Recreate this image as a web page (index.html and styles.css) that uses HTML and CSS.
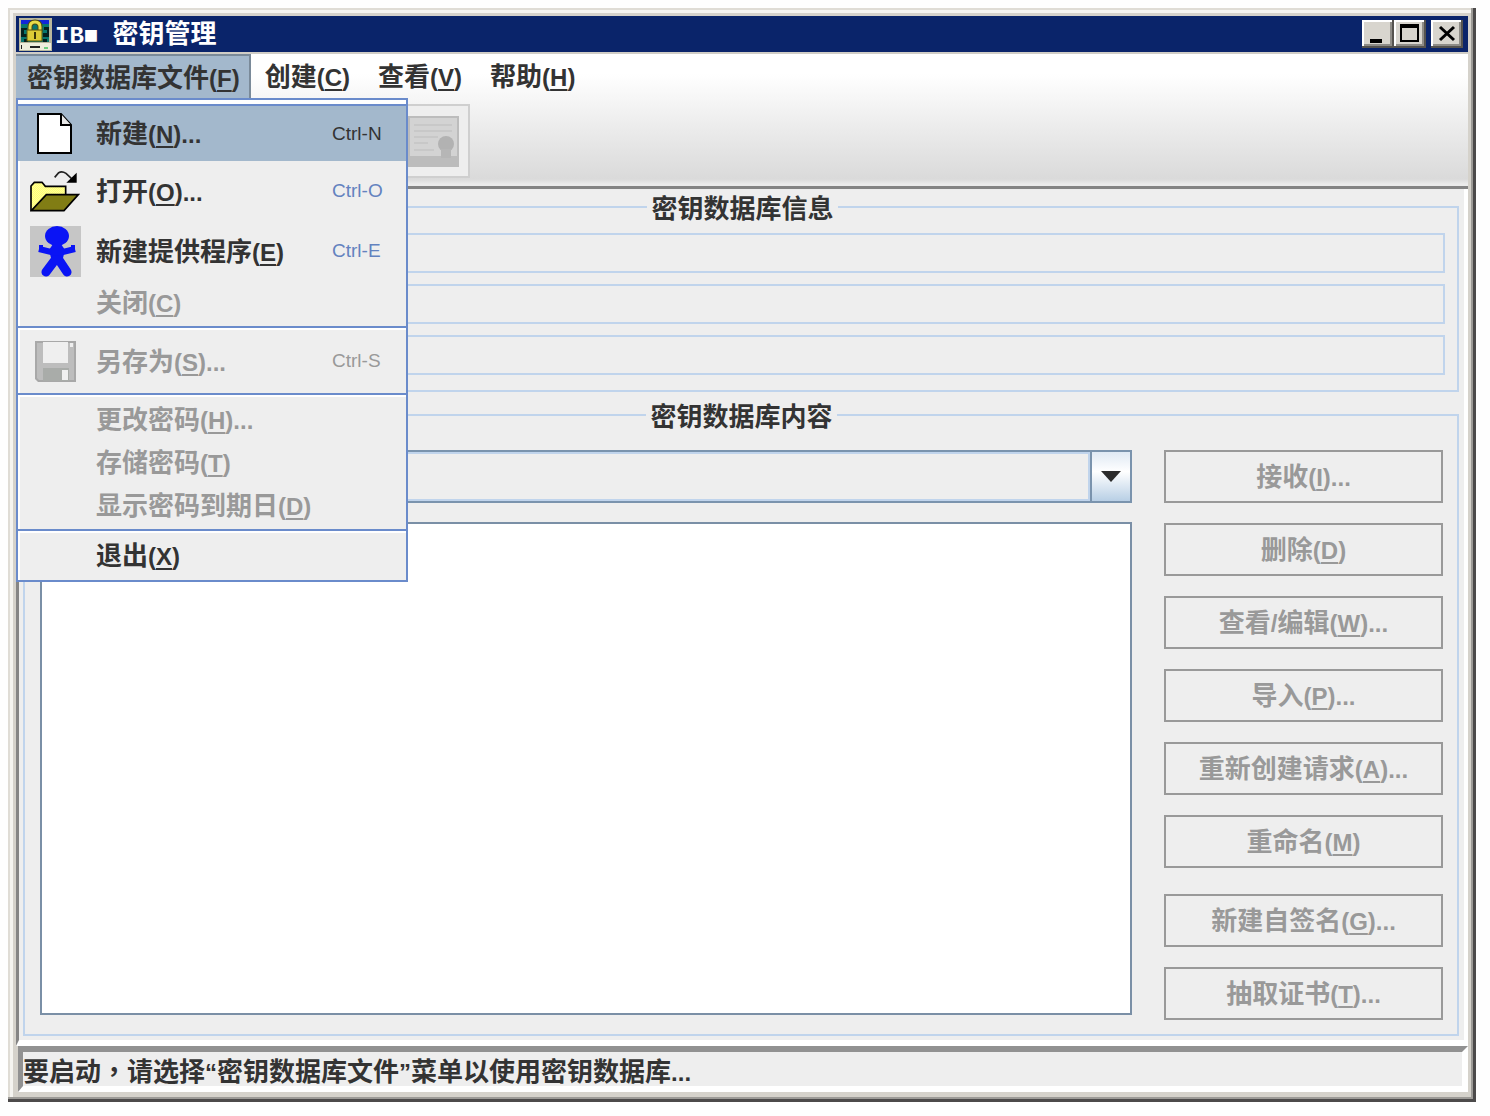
FILE: index.html
```html
<!DOCTYPE html>
<html lang="zh-CN">
<head>
<meta charset="utf-8">
<title>IBM 密钥管理</title>
<link rel="stylesheet" href="styles.css">
</head>
<body>
<div class="window">
  <header class="titlebar">
    <svg class="app-icon" viewBox="0 0 33 33" aria-hidden="true">
      <rect width="33" height="33" fill="#b9b79c"/>
      <rect x="2" y="2" width="28" height="22" fill="#08766f"/>
      <path d="M2 2h28v4H2z" fill="#1226d8"/>
      <path d="M2 10h6v2h-3v4h4v3H2zM30 9h-5v3h3v3h-4v4h6zM5 21h4v3H5zM24 21h4v3h-4z" fill="#04211f"/>
      <path d="M11 14V9q0-5 5-5t5 5v5" fill="none" stroke="#4e4a10" stroke-width="5"/>
      <path d="M11 14V9q0-5 5-5t5 5v5" fill="none" stroke="#e8dc4a" stroke-width="3"/>
      <rect x="8" y="12" width="15" height="11" fill="#dccb36" stroke="#5e560e"/>
      <path d="M15 14h2v7h-2z" fill="#38340a"/>
      <path d="M1 25h31v7H1z" fill="#eeeedd"/>
      <path d="M11 28h10v2H11zM2 27h1v4H2z" fill="#222"/>
      <path d="M25 29h4v2h-4z" fill="#6ed080"/>
    </svg>
    <h1 class="title"><span class="title-latin">IB■ </span>密钥管理</h1>
    <div class="controls">
      <button class="control" aria-label="最小化"><svg viewBox="0 0 32 28"><path d="M8 19h12v4H8z"/></svg></button>
      <button class="control" aria-label="最大化"><svg viewBox="0 0 32 28"><path d="M6 4h19v18H6zM8 8v12h15V8z" fill-rule="evenodd"/></svg></button>
      <button class="control control-close" aria-label="关闭"><svg viewBox="0 0 32 28"><path d="M9 7l14 13M23 7L9 20" stroke="#000" stroke-width="3"/></svg></button>
    </div>
  </header>

  <div class="header">
    <nav class="menubar">
      <button class="menu-title menu-open">密钥数据库文件<span class="key">(<u>F</u>)</span></button>
      <button class="menu-title">创建<span class="key">(<u>C</u>)</span></button>
      <button class="menu-title">查看<span class="key">(<u>V</u>)</span></button>
      <button class="menu-title">帮助<span class="key">(<u>H</u>)</span></button>
    </nav>
    <div class="toolbar">
      <button class="tool" disabled aria-label="证书">
        <svg viewBox="0 0 51 51" width="51" height="51">
          <rect width="51" height="51" fill="#bcbcbc"/>
          <rect x="2" y="2" width="47" height="38" fill="#d3d3d3"/>
          <path d="M6 9h38M6 15h38M6 21h24M6 27h14M6 34h20" stroke="#c8c8c8" stroke-width="2"/>
          <circle cx="38" cy="28" r="8" fill="#b2b2b2"/>
          <path d="M33 33h10v9H33z" fill="#b6b6b6"/>
        </svg>
      </button>
    </div>

    <div class="menu" role="menu">
      <button class="item item-icon selected" role="menuitem">
        <svg class="icon" viewBox="0 0 36 42" width="36" height="42"><path d="M1 1h23l10 11v28H1z" fill="#fff" stroke="#000" stroke-width="2"/><path d="M24 1v11h10" fill="#e8e8e8" stroke="#000" stroke-width="2"/></svg>
        <span>新建<span class="key">(<u>N</u>)...</span></span><span class="accel">Ctrl-N</span>
      </button>
      <button class="item item-icon" role="menuitem">
        <svg class="icon" viewBox="28 216 150 126" width="50" height="42">
          <defs><pattern id="weave" width="6" height="6" patternUnits="userSpaceOnUse"><path d="M0 0h6v6H0z" fill="#ffff4c"/><path d="M0 0h3v3H0zM3 3h3v3H3z" fill="#fffec0"/></pattern></defs>
          <path d="M31 338v-74l10-11h23l10 12h61v24" fill="url(#weave)" stroke="#000" stroke-width="5"/>
          <path d="M32 338l45-48h96l-43 48z" fill="#817d14" stroke="#000" stroke-width="5"/>
          <path d="M102 238l12-14q10-6 22 2l16 15" fill="none" stroke="#222" stroke-width="5"/>
          <path d="M168 224v30h-31z"/>
        </svg>
        <span>打开<span class="key">(<u>O</u>)...</span></span><span class="accel">Ctrl-O</span>
      </button>
      <button class="item item-icon" role="menuitem">
        <svg class="icon" viewBox="0 0 51 51" width="51" height="51">
          <rect width="51" height="51" fill="#c6c6c6"/>
          <ellipse cx="27" cy="10" rx="12" ry="10" fill="#0a14f5"/>
          <path d="M23 18h8l4 6-3 12H22l-3-12z" fill="#0a14f5"/>
          <path d="M9 23l12 3h12l12-3" fill="none" stroke="#0a14f5" stroke-width="6"/>
          <path d="M11 19v5M43 19v5" stroke="#0a14f5" stroke-width="4"/>
          <path d="M25 34l-9 12M29 34l8 12" stroke="#0a14f5" stroke-width="9" stroke-linecap="round"/>
        </svg>
        <span>新建提供程序<span class="key">(<u>E</u>)</span></span><span class="accel">Ctrl-E</span>
      </button>
      <button class="item" role="menuitem" disabled><span class="label">关闭<span class="key">(<u>C</u>)</span></span></button>
      <hr class="separator">
      <button class="item item-icon" role="menuitem" disabled>
        <svg class="icon" viewBox="0 0 41 41" width="41" height="41">
          <path d="M0 0h41v41H3l-3-3z" fill="#a8a8a8"/>
          <path d="M2 2h37v37H4l-2-2z" fill="#bdbdbd"/>
          <path d="M8 1h25v21H8zM35 2h3v4h-3z" fill="#efefef"/>
          <path d="M8 27h26v13H8z" fill="#a9aca9"/>
          <path d="M27 29h6v10h-6z" fill="#f1f1f1"/>
        </svg>
        <span>另存为<span class="key">(<u>S</u>)...</span></span><span class="accel">Ctrl-S</span>
      </button>
      <hr class="separator">
      <button class="item" role="menuitem" disabled><span class="label">更改密码<span class="key">(<u>H</u>)...</span></span></button>
      <button class="item" role="menuitem" disabled><span class="label">存储密码<span class="key">(<u>T</u>)</span></span></button>
      <button class="item" role="menuitem" disabled><span class="label">显示密码到期日<span class="key">(<u>D</u>)</span></span></button>
      <hr class="separator">
      <button class="item" role="menuitem"><span class="label">退出<span class="key">(<u>X</u>)</span></span></button>
    </div>
  </div>

  <main class="main">
    <fieldset class="group info">
      <legend>密钥数据库信息</legend>
      <input class="field" type="text" readonly aria-label="数据库类型">
      <input class="field" type="text" readonly aria-label="文件名">
      <input class="field" type="text" readonly aria-label="令牌标签">
    </fieldset>
    <fieldset class="group content">
      <legend>密钥数据库内容</legend>
      <div class="columns">
        <div class="browse">
          <div class="combo">
            <select class="combo-select" aria-label="证书类型"><option></option></select>
            <span class="combo-arrow"><svg viewBox="0 0 20 11" width="20" height="11"><path d="M0 0h20L10 11z" fill="#2c2c2c"/></svg></span>
          </div>
          <div class="list" role="listbox" aria-label="证书"></div>
        </div>
        <div class="actions">
          <div class="stack">
            <button class="action" disabled>接收<span class="key">(<u>I</u>)...</span></button>
            <button class="action" disabled>删除<span class="key">(<u>D</u>)</span></button>
            <button class="action" disabled>查看<span class="key">/</span>编辑<span class="key">(<u>W</u>)...</span></button>
            <button class="action" disabled>导入<span class="key">(<u>P</u>)...</span></button>
            <button class="action" disabled>重新创建请求<span class="key">(<u>A</u>)...</span></button>
            <button class="action" disabled>重命名<span class="key">(<u>M</u>)</span></button>
          </div>
          <div class="stack">
            <button class="action" disabled>新建自签名<span class="key">(<u>G</u>)...</span></button>
            <button class="action" disabled>抽取证书<span class="key">(<u>T</u>)...</span></button>
          </div>
        </div>
      </div>
    </fieldset>
  </main>
  <footer class="status">要启动<span class="comma" lang="zh-Hant">，</span>请选择<span class="key">“</span>密钥数据库文件<span class="key">”</span>菜单以使用密钥数据库<span class="key">...</span></footer>
</div>
</body>
</html>
```
FILE: styles.css
```css
* { box-sizing: border-box; }

body {
  margin: 0;
  background: #fefefe;
  color: #333;
  font: bold 26px/36px "Noto Sans CJK SC", sans-serif;
}

button, input, select { font: inherit; color: inherit; margin: 0; border-radius: 0; }

.key { font-family: "Liberation Sans", sans-serif; font-size: 24px; }
.key u { text-decoration-thickness: 2px; text-underline-offset: 3px; }

.window {
  display: flex;
  flex-direction: column;
  min-height: calc(100vh - 22px);
  margin: 8px 14px 14px 8px;
  padding: 8px 8px 10px;
  background: #d5d2cb;
  box-shadow: inset -3px -3px #4c4a4a, inset -5px -5px #9c9a96, inset 2px 2px #dfdcd5, inset 5px 5px #f5f4f0;
}

/* Title bar */
.titlebar {
  display: flex;
  align-items: center;
  height: 36px;
  padding: 0 5px 0 3px;
  background: #0a246a;
  color: #fff;
}
.app-icon { width: 33px; height: 33px; margin-right: 3px; }
.title { flex: 1; margin: 0; font-size: 26px; line-height: 36px; white-space: pre; }
.title-latin { font-family: "Liberation Mono", monospace; font-size: 24px; }
.controls { display: flex; }
.control {
  width: 32px;
  height: 28px;
  padding: 0;
  border: 0;
  background: #d8d5ce;
  box-shadow: inset -2px -2px #55534f, inset 2px 2px #fff, inset -4px -4px #8e8c87;
}
.control svg { display: block; width: 32px; height: 28px; }
.control-close { margin-left: 5px; }

/* Menu bar and toolbar */
.header {
  position: relative;
  height: 137px;
  border-top: 2px solid #d0cdc6;
  border-bottom: 3px solid #858585;
  background: linear-gradient(#fff 0, #fff 20px, #ededed 70px, #dadada 125px, #ececec 130px);
}
.menubar { display: flex; height: 44px; }
.menu-title { padding: 0 14px; border: 0; background: none; white-space: nowrap; line-height: 36px; }
.menu-open {
  padding: 0 9px 0 11px;
  border: 1px solid #7a8a99;
  border-width: 2px 2px 0 0;
  background: #a3b8cc;
}
.toolbar { display: flex; padding: 6px 0 6px 380px; }
.tool {
  display: grid;
  place-items: center;
  width: 74px;
  height: 74px;
  padding: 0;
  border: 2px solid #cfcfcf;
  background: #eee;
}

/* Drop-down menu */
.menu {
  position: absolute;
  top: 44px;
  left: 0;
  z-index: 1;
  width: 392px;
  padding: 4px 0 3px;
  border: 2px solid #6a8bcb;
  background: #eee;
  box-shadow: inset 2px 4px #fff;
}
.item {
  display: grid;
  grid-template-columns: 74px 1fr 74px;
  column-gap: 4px;
  align-items: center;
  width: 100%;
  height: 43px;
  padding: 0;
  border: 0;
  background: none;
  text-align: left;
  white-space: nowrap;
}
.item-icon { height: 60px; }
.icon { justify-self: center; }
.label { grid-column: 2; }
.selected { height: 57px; border-top: 2px solid #6a8bcb; background: #a3b8cc; }
.accel { color: #6382bf; font: 19px/24px "Liberation Sans", sans-serif; }
.selected .accel { color: #333; }
.item:disabled, .item:disabled .accel, .action:disabled { color: #999; }
.separator {
  height: 4px;
  margin: 2px 0 1px;
  border: 0;
  border-top: 2px solid #6a8bcb;
  border-bottom: 2px solid #fff;
}

/* Main panel */
.main {
  flex: 1;
  display: flex;
  flex-direction: column;
  gap: 5px;
  padding: 0 5px 4px 4px;
  border: 0 solid #fff;
  border-width: 0 4px 6px 3px;
  border-left-color: #858585;
  background: #eee;
}
.group { min-width: 0; margin: 0; border: 2px solid #c0d4ec; }
.group legend { margin: 0 auto; padding: 0 4px; }
.info { padding: 8px 12px 15px 15px; }
.field {
  display: block;
  width: 100%;
  height: 40px;
  border: 2px solid #c0d4ec;
  background: #eee;
}
.field + .field { margin-top: 11px; }
.content { flex: 1; padding: 17px 14px 14px 15px; }
.columns { display: flex; gap: 32px; height: 100%; }
.browse { flex: 1; display: flex; flex-direction: column; gap: 19px; padding-bottom: 5px; }
.combo { display: flex; height: 53px; border: 2px solid #7a93ad; }
.combo-select { flex: 1; appearance: none; border: 2px solid #c0d4ec; background: #eee; }
.combo-arrow {
  display: grid;
  place-items: center;
  width: 40px;
  border-left: 2px solid #7a93ad;
  background: linear-gradient(#dfe9f4, #fff 40%, #b8cfe5);
}
.list { flex: 1; border: 2px solid #7a8fa6; background: #fff; }
.actions { display: flex; flex-direction: column; gap: 26px; width: 279px; }
.stack { display: flex; flex-direction: column; gap: 20px; }
.action { height: 53px; padding: 0; border: 2px solid #999; background: #eee; }

/* Status bar */
.status {
  height: 46px;
  margin-left: 2px;
  border: 0 solid #fff;
  border-width: 6px 6px 6px 5px;
  border-top-color: #919191;
  border-left-color: #919191;
  background: #eee;
  line-height: 36px;
  white-space: nowrap;
}
.comma { font-family: "Noto Sans CJK TC", sans-serif; }
```
